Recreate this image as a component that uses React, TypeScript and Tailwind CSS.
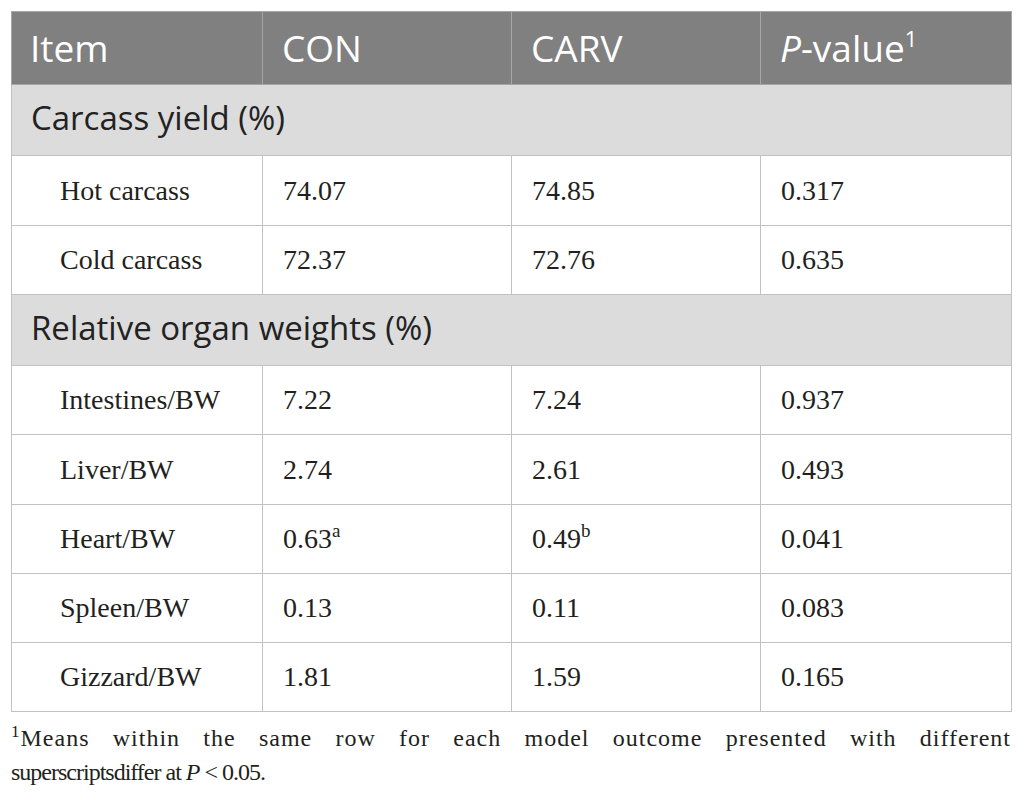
import React from 'react'

type Row = { item: string; con: string; carv: string; p: string; conSup?: string; carvSup?: string; h: string }

const carcass: Row[] = [
  { item: 'Hot carcass', con: '74.07', carv: '74.85', p: '0.317', h: 'h-[70px]' },
  { item: 'Cold carcass', con: '72.37', carv: '72.76', p: '0.635', h: 'h-[69px]' },
]

const organs: Row[] = [
  { item: 'Intestines/BW', con: '7.22', carv: '7.24', p: '0.937', h: 'h-[69px]' },
  { item: 'Liver/BW', con: '2.74', carv: '2.61', p: '0.493', h: 'h-[70px]' },
  { item: 'Heart/BW', con: '0.63', conSup: 'a', carv: '0.49', carvSup: 'b', p: '0.041', h: 'h-[69px]' },
  { item: 'Spleen/BW', con: '0.13', carv: '0.11', p: '0.083', h: 'h-[69px]' },
  { item: 'Gizzard/BW', con: '1.81', carv: '1.59', p: '0.165', h: 'h-[69px]' },
]

const cell = 'border border-[#c2c2c2] align-middle pl-[20px]'
const sup = 'relative -top-[11px] text-[19px] leading-none'

function DataRow({ r }: { r: Row }) {
  return (
    <tr className={r.h}>
      <td className={`${cell} pl-[48px]`}>{r.item}</td>
      <td className={cell}>
        {r.con}
        {r.conSup && <span className={sup}>{r.conSup}</span>}
      </td>
      <td className={cell}>
        {r.carv}
        {r.carvSup && <span className={sup}>{r.carvSup}</span>}
      </td>
      <td className={cell}>{r.p}</td>
    </tr>
  )
}

function Section({ title }: { title: string }) {
  return (
    <tr className="h-[71px] bg-[#dcdcdc]">
      <td colSpan={4} className="border border-[#c2c2c2] pl-[19px] pb-[4px] align-middle font-['Open_Sans',sans-serif] text-[33px] text-[#222]">
        {title}
      </td>
    </tr>
  )
}

export default function App() {
  return (
    <div className="w-[1025px] h-[800px] bg-white pt-[11px] px-[11px] font-['Liberation_Serif',serif] text-[28px] text-[#231f20]">
      <table className="w-[1000px] table-fixed border-collapse">
        <colgroup>
          <col className="w-[251px]" />
          <col className="w-[249px]" />
          <col className="w-[249px]" />
          <col className="w-[251px]" />
        </colgroup>
        <thead>
          <tr className="h-[73px] bg-[#808080] text-white font-['Open_Sans',sans-serif] text-[37px]">
            <th className="border border-[#a6a6a6] pl-[18px] text-left font-normal align-middle">Item</th>
            <th className="border border-[#a6a6a6] pl-[19px] text-left font-normal align-middle">CON</th>
            <th className="border border-[#a6a6a6] pl-[19px] text-left font-normal align-middle">CARV</th>
            <th className="border border-[#a6a6a6] pl-[19px] text-left font-normal align-middle">
              <i>P</i>-value<span className="relative -top-[15px] text-[22px] leading-none">1</span>
            </th>
          </tr>
        </thead>
        <tbody>
          <Section title="Carcass yield (%)" />
          {carcass.map((r) => (
            <DataRow key={r.item} r={r} />
          ))}
          <Section title="Relative organ weights (%)" />
          {organs.map((r) => (
            <DataRow key={r.item} r={r} />
          ))}
        </tbody>
      </table>
      <div className="mt-[9px] w-[1000px] text-[24px] leading-[34px]">
        <p className="text-justify tracking-[1px] [text-align-last:justify]">
          <span className="relative -top-[9px] text-[17px] leading-none">1</span>Means within the same row for each model outcome presented with different
        </p>
        <p className="tracking-[-1px]">
          superscriptsdiffer at <i>P</i> &lt; 0.05.
        </p>
      </div>
    </div>
  )
}
